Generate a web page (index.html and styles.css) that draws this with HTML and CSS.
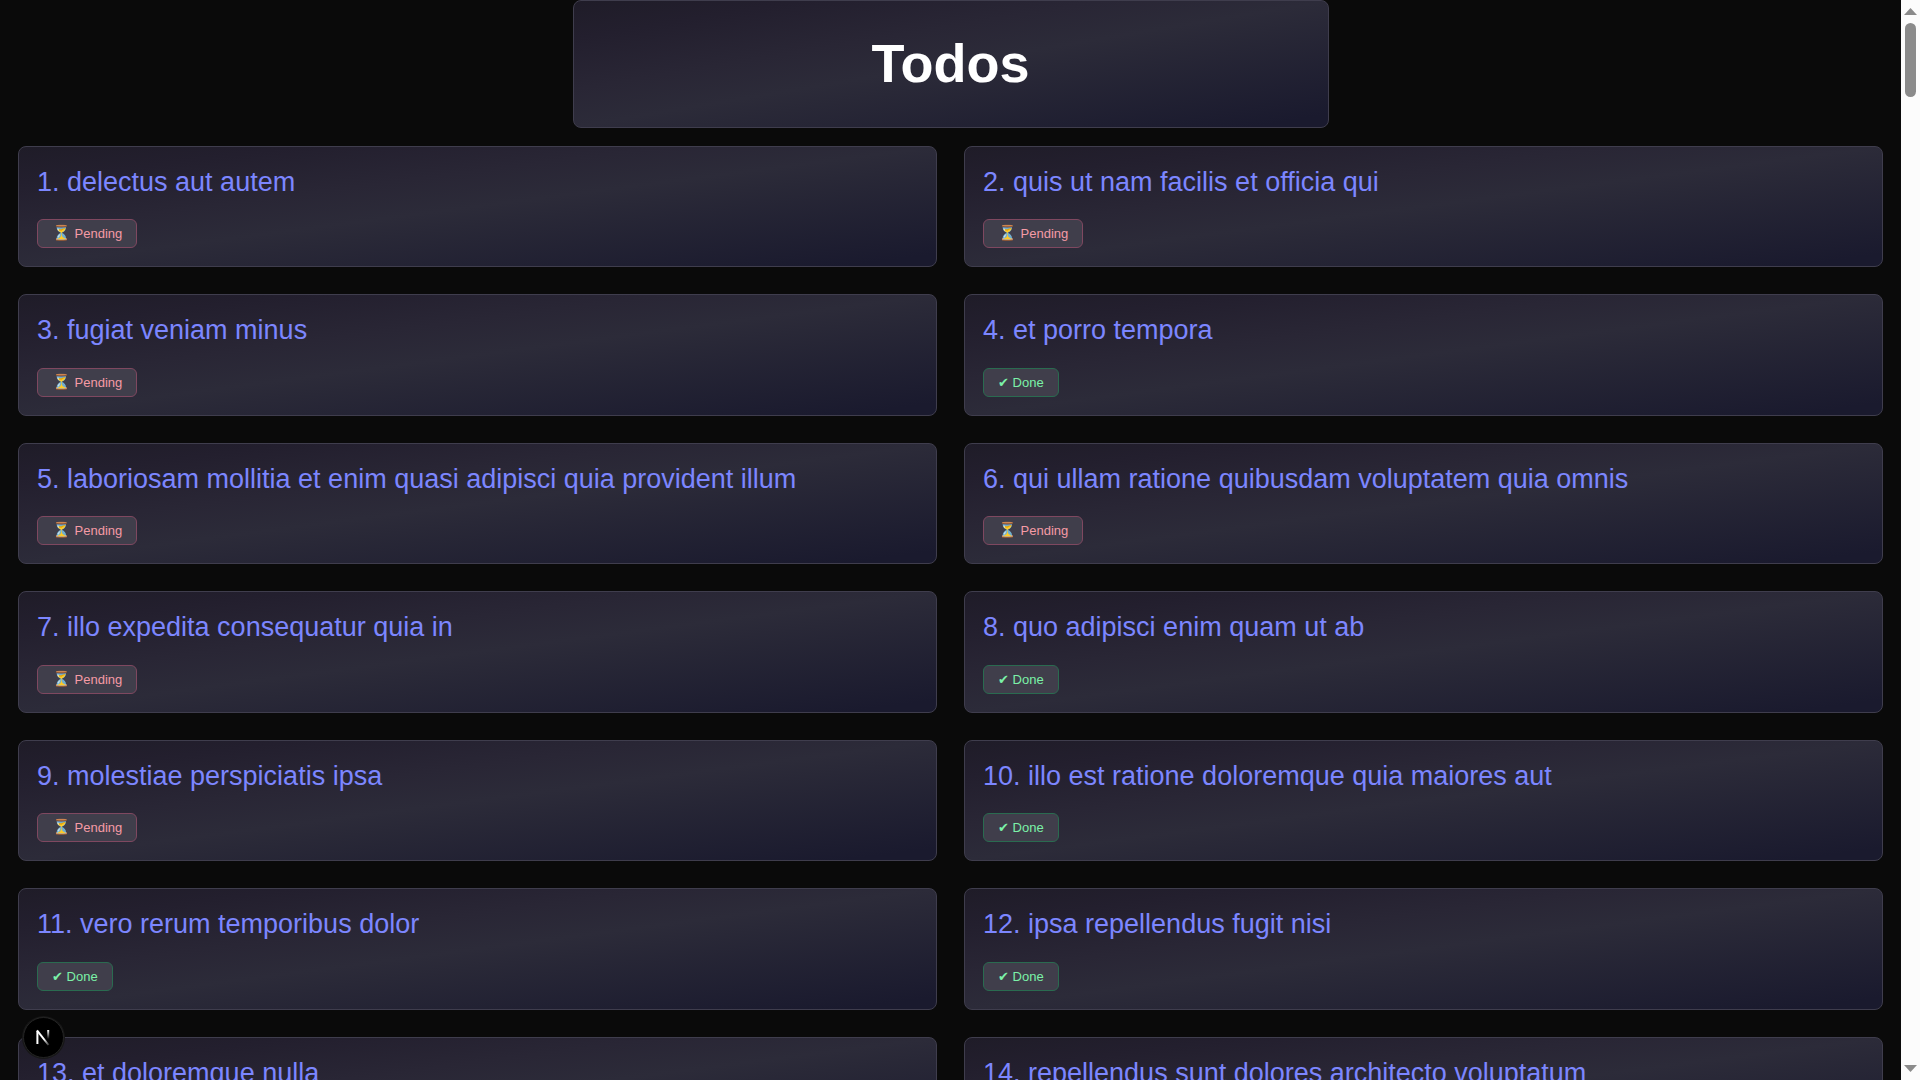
FILE: index.html
```html
<!DOCTYPE html>
<html lang="en">
<head>
<meta charset="utf-8">
<title>Todos</title>
<link rel="stylesheet" href="styles.css">
</head>
<body>
<div class="page">
  <header class="header panel"><h1 class="heading">Todos</h1></header>
  <main class="todos">
    <article class="card panel"><h2 class="title">1. delectus aut autem</h2><span class="status pending"><span class="emoji">⏳</span> Pending</span></article>
    <article class="card panel"><h2 class="title">2. quis ut nam facilis et officia qui</h2><span class="status pending"><span class="emoji">⏳</span> Pending</span></article>
    <article class="card panel"><h2 class="title">3. fugiat veniam minus</h2><span class="status pending"><span class="emoji">⏳</span> Pending</span></article>
    <article class="card panel"><h2 class="title">4. et porro tempora</h2><span class="status done">✔ Done</span></article>
    <article class="card panel"><h2 class="title">5. laboriosam mollitia et enim quasi adipisci quia provident illum</h2><span class="status pending"><span class="emoji">⏳</span> Pending</span></article>
    <article class="card panel"><h2 class="title">6. qui ullam ratione quibusdam voluptatem quia omnis</h2><span class="status pending"><span class="emoji">⏳</span> Pending</span></article>
    <article class="card panel"><h2 class="title">7. illo expedita consequatur quia in</h2><span class="status pending"><span class="emoji">⏳</span> Pending</span></article>
    <article class="card panel"><h2 class="title">8. quo adipisci enim quam ut ab</h2><span class="status done">✔ Done</span></article>
    <article class="card panel"><h2 class="title">9. molestiae perspiciatis ipsa</h2><span class="status pending"><span class="emoji">⏳</span> Pending</span></article>
    <article class="card panel"><h2 class="title">10. illo est ratione doloremque quia maiores aut</h2><span class="status done">✔ Done</span></article>
    <article class="card panel"><h2 class="title">11. vero rerum temporibus dolor</h2><span class="status done">✔ Done</span></article>
    <article class="card panel"><h2 class="title">12. ipsa repellendus fugit nisi</h2><span class="status done">✔ Done</span></article>
    <article class="card panel"><h2 class="title">13. et doloremque nulla</h2></article>
    <article class="card panel"><h2 class="title">14. repellendus sunt dolores architecto voluptatum</h2></article>
  </main>
</div>
<div class="scrollbar" aria-hidden="true">
  <svg class="arrow" viewBox="0 0 13 7"><path d="M6.5 0 13 7H0Z"/></svg>
  <div class="thumb"></div>
  <svg class="arrow arrow-down" viewBox="0 0 13 7"><path d="M0 0H13L6.5 7Z"/></svg>
</div>
<button class="devtools" type="button" aria-label="Open Next.js Dev Tools">
  <svg class="logo" viewBox="0 0 18 17" fill="none">
    <defs>
      <linearGradient id="diagonal" x1="9" y1="10" x2="14" y2="16" gradientUnits="userSpaceOnUse"><stop stop-color="#fff"/><stop offset="1" stop-color="#fff" stop-opacity="0.2"/></linearGradient>
      <linearGradient id="stem" x1="0" y1="1" x2="0" y2="10" gradientUnits="userSpaceOnUse"><stop stop-color="#fff"/><stop offset="1" stop-color="#fff" stop-opacity="0"/></linearGradient>
    </defs>
    <path d="M2.4 15V2" stroke="#fff" stroke-width="2"/>
    <path d="M2 1.4 13.5 16" stroke="url(#diagonal)" stroke-width="2"/>
    <path d="M13.2 1V11" stroke="url(#stem)" stroke-width="2"/>
  </svg>
</button>
</body>
</html>
```
FILE: styles.css
```css
* {
  box-sizing: border-box;
}

body {
  margin: 0;
  height: 100vh;
  display: flex;
  overflow: hidden;
  background: #0a0a0a;
  font-family: "Liberation Sans", Arial, sans-serif;
}

.page {
  flex: 1;
  min-width: 0;
  overflow: hidden;
}

.panel {
  border: 1px solid #3f3d4d;
  border-radius: 8px;
  background: linear-gradient(to bottom right, #1f1c28, #231f2e 15%, #292635 35%, #2c2b39 50%, #1a1a2e 95%);
}

.header {
  width: 756px;
  max-width: 100%;
  margin: 0 auto 18px;
  padding: 31px 32px 33px;
  text-align: center;
}

.heading {
  margin: 0;
  color: #fff;
  font-size: 54px;
  line-height: 62px;
}

.todos {
  display: grid;
  grid-template-columns: 1fr 1fr;
  grid-auto-rows: minmax(121px, auto) minmax(122px, auto);
  gap: 27px;
  padding: 0 18px;
}

.card {
  display: flex;
  flex-direction: column;
  align-items: flex-start;
  justify-content: space-between;
  gap: 20px;
  padding: 18px;
}

.title {
  margin: 0;
  color: #7c86ff;
  font-size: 27px;
  font-weight: 400;
  line-height: 34px;
}

.status {
  padding: 0 14px;
  border: 1px solid;
  border-radius: 6px;
  background: #403e4b;
  font-size: 13px;
  line-height: 27px;
}

.emoji {
  font-size: 15px;
  line-height: 1;
}

.pending {
  border-color: #7f4860;
  color: #f59ba5;
}

.done {
  border-color: #2a6b50;
  color: #7bf1a8;
}

.scrollbar {
  width: 19px;
  flex: none;
  display: flex;
  flex-direction: column;
  align-items: center;
  gap: 8px;
  padding: 8px 0;
  background: #fcfcfc;
}

.arrow {
  width: 13px;
  height: 7px;
  fill: #8b8b8b;
}

.arrow-down {
  margin-top: auto;
}

.thumb {
  width: 11px;
  height: 74px;
  border-radius: 6px;
  background: #8b8b8b;
}

.devtools {
  position: fixed;
  left: 23px;
  bottom: 22px;
  width: 41px;
  height: 41px;
  display: flex;
  align-items: center;
  justify-content: center;
  padding: 0;
  border: 1px solid #242424;
  border-radius: 50%;
  background: #000;
  box-shadow: 0 0 0 1px #171717;
}

.logo {
  width: 18px;
  height: 17px;
}
```
